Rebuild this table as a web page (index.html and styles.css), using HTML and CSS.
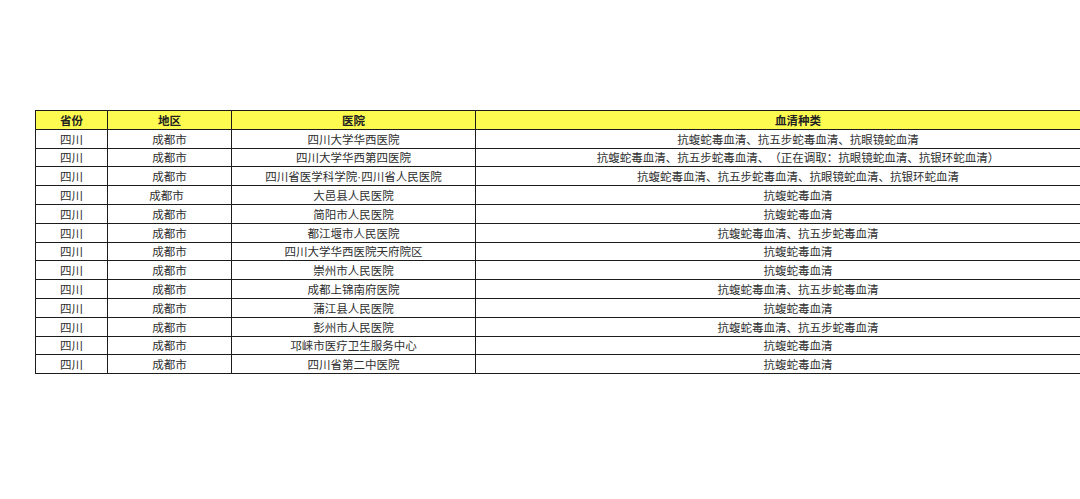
FILE: index.html
```html
<!DOCTYPE html>
<html lang="zh">
<head>
<meta charset="utf-8">
<title>蛇毒血清医院</title>
<link rel="stylesheet" href="styles.css">
</head>
<body>
<div class="page">
<table class="sheet">
<colgroup>
<col class="c1"><col class="c2"><col class="c3"><col class="c4">
</colgroup>
<thead>
<tr><th>省份</th><th>地区</th><th>医院</th><th>血清种类</th></tr>
</thead>
<tbody>
<tr><td>四川</td><td>成都市</td><td>四川大学华西医院</td><td>抗蝮蛇毒血清、抗五步蛇毒血清、抗眼镜蛇血清</td></tr>
<tr><td>四川</td><td>成都市</td><td>四川大学华西第四医院</td><td>抗蝮蛇毒血清、抗五步蛇毒血清、（正在调取：抗眼镜蛇血清、抗银环蛇血清）</td></tr>
<tr><td>四川</td><td>成都市</td><td>四川省医学科学院<span class="dot">·</span>四川省人民医院</td><td>抗蝮蛇毒血清、抗五步蛇毒血清、抗眼镜蛇血清、抗银环蛇血清</td></tr>
<tr><td>四川</td><td class="shift">成都市</td><td>大邑县人民医院</td><td>抗蝮蛇毒血清</td></tr>
<tr><td>四川</td><td>成都市</td><td>简阳市人民医院</td><td>抗蝮蛇毒血清</td></tr>
<tr><td>四川</td><td>成都市</td><td>都江堰市人民医院</td><td>抗蝮蛇毒血清、抗五步蛇毒血清</td></tr>
<tr><td>四川</td><td>成都市</td><td>四川大学华西医院天府院区</td><td>抗蝮蛇毒血清</td></tr>
<tr><td>四川</td><td>成都市</td><td>崇州市人民医院</td><td>抗蝮蛇毒血清</td></tr>
<tr><td>四川</td><td>成都市</td><td>成都上锦南府医院</td><td>抗蝮蛇毒血清、抗五步蛇毒血清</td></tr>
<tr><td>四川</td><td>成都市</td><td>蒲江县人民医院</td><td>抗蝮蛇毒血清</td></tr>
<tr><td>四川</td><td>成都市</td><td>彭州市人民医院</td><td>抗蝮蛇毒血清、抗五步蛇毒血清</td></tr>
<tr><td>四川</td><td>成都市</td><td>邛崃市医疗卫生服务中心</td><td>抗蝮蛇毒血清</td></tr>
<tr><td>四川</td><td>成都市</td><td>四川省第二中医院</td><td>抗蝮蛇毒血清</td></tr>
</tbody>
</table>
</div>
</body>
</html>
```

FILE: styles.css
```css
html, body {
  margin: 0;
  padding: 0;
  background: #ffffff;
  overflow: hidden;
}
.page {
  width: 1080px;
  height: 499px;
  overflow: hidden;
  padding: 110px 0 0 35px;
  box-sizing: border-box;
}
.sheet {
  border-collapse: collapse;
  table-layout: fixed;
  width: 1085px;
  font-family: "Noto Sans CJK SC", "Noto Sans", sans-serif;
  font-size: 11.5px;
  color: #2e2e2e;
  text-spacing-trim: space-all;
}
.c1 { width: 72px; }
.c2 { width: 124px; }
.c3 { width: 244px; }
.c4 { width: 645px; }
.sheet th,
.sheet td {
  border: 1px solid #1c1c1c;
  height: 17.8px;
  padding: 0;
  text-align: center;
  vertical-align: middle;
  line-height: 16px;
  white-space: nowrap;
  overflow: hidden;
}
.sheet th {
  background: #fdfa50;
  font-weight: 700;
  color: #222;
}
.sheet td.shift {
  padding-right: 6px;
}
.dot {
  font-family: "Liberation Sans", sans-serif;
}
```
